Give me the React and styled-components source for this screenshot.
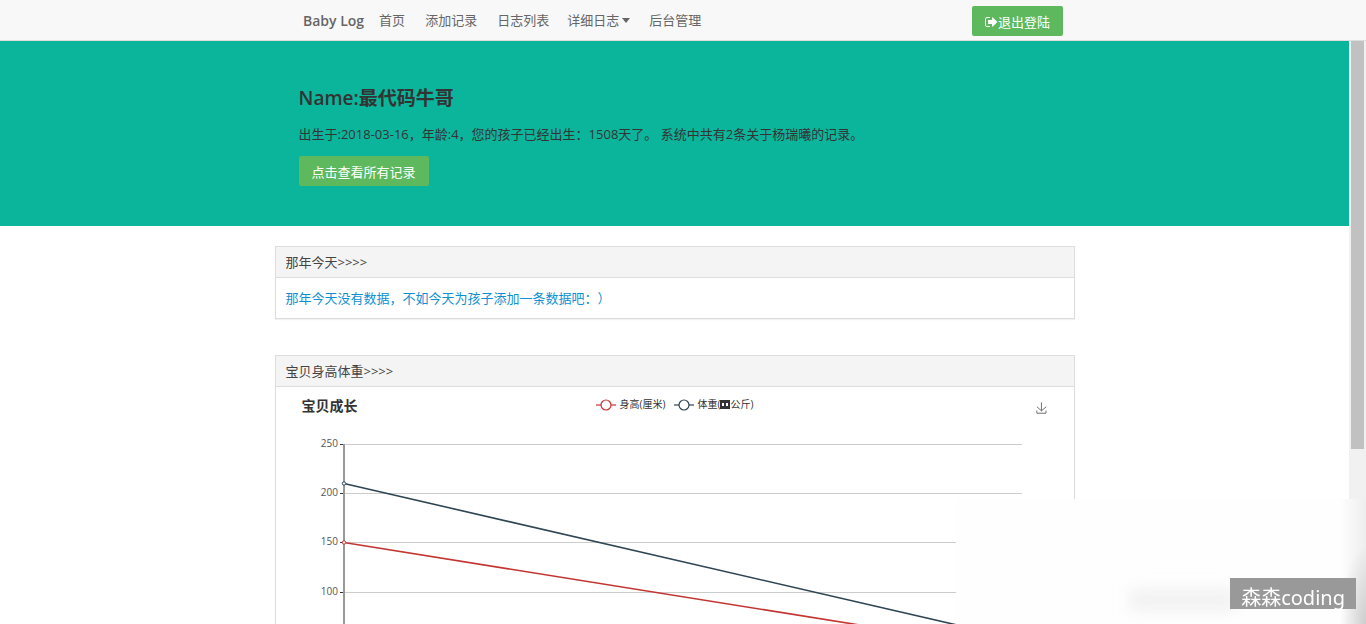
import React from 'react';
import styled, { createGlobalStyle } from 'styled-components';

const GlobalStyle = createGlobalStyle`
  *, *::before, *::after { box-sizing: border-box; }
  body {
    margin: 0;
    overflow: hidden;
    background: #fff;
    color: #333;
    font: 13px/20px "Open Sans", "Noto Sans CJK SC", sans-serif;
    text-spacing-trim: space-all;
  }
  button { font: inherit; cursor: pointer; }
  a { text-decoration: none; }
`;

const Page = styled.div`
  display: flex;
  flex-direction: column;
  height: 100vh;
  overflow: hidden;
`;

const Topbar = styled.header`
  flex: none;
  background: #f8f8f8;
  border-bottom: 1px solid #ddd;
`;

const TopbarInner = styled.div`
  display: flex;
  align-items: center;
  max-width: 800px;
  height: 40px;
  margin: 0 auto;
  padding: 2px 20px 0;
`;

const Brand = styled.a`
  color: #666;
  font-size: 14px;
  font-weight: 600;
  margin-right: 5px;
`;

const Nav = styled.nav`
  display: flex;
  flex: 1;
  padding-bottom: 2px;
`;

const NavLink = styled.a`
  padding: 0 10px;
  color: #666;
`;

const NavMenu = styled.button`
  display: flex;
  align-items: center;
  gap: 3px;
  padding: 0 9px 0 8px;
  border: 0;
  background: none;
  color: #666;
  &::after {
    content: "";
    border: 4px solid transparent;
    border-top: 5px solid #666;
    border-bottom: 0;
  }
`;

const Button = styled.button`
  display: inline-flex;
  align-items: center;
  height: 30px;
  padding: 1px 13px 0;
  border: 0;
  border-radius: 2px;
  background: #5eb95e;
  color: #fff;
`;

const Viewport = styled.div`
  display: flex;
  flex: 1;
  min-height: 0;
`;

const Main = styled.main`
  flex: 1;
  min-width: 0;
  overflow: hidden;
`;

const Track = styled.div`
  flex: none;
  width: 17px;
  padding: 0 2px;
  background: #f1f1f1;
`;

const Thumb = styled.div`
  height: 70%;
  background: #c1c1c1;
`;

const Hero = styled.section`
  padding: 40px 0;
  background: #0bb59b;
`;

const HeroInner = styled.div`
  max-width: 800px;
  margin: 0 auto;
  padding: 0 24px;
`;

const HeroTitle = styled.h1`
  margin: 0 0 11px;
  padding-top: 2px;
  font-size: 19px;
  line-height: 30px;
  font-weight: 600;
`;

const HeroText = styled.p`
  margin: 0 0 12px;
`;

const Panels = styled.div`
  display: flex;
  flex-direction: column;
  gap: 36px;
  max-width: 800px;
  margin: 20px auto;
`;

const Panel = styled.section`
  border: 1px solid #ddd;
  box-shadow: 0 1px 1px rgba(0, 0, 0, 0.05);
`;

const PanelTitle = styled.h2`
  margin: 0;
  padding: 5px 10px;
  border-bottom: 1px solid #ddd;
  background: #f4f4f4;
  color: #444;
  font-size: 13px;
  font-weight: 400;
`;

const PanelBody = styled.div`
  padding: 10px;
  a { color: #0e90d2; }
`;

const ChartHead = styled.div`
  display: grid;
  grid-template-columns: 1fr auto 1fr;
  height: 39px;
  padding: 9px 26px 0;
`;

const ChartTitle = styled.h3`
  margin: 0;
  font-size: 14px;
  line-height: 20px;
  font-weight: 700;
`;

const Legend = styled.ul`
  display: flex;
  gap: 8px;
  margin: 0;
  padding: 0;
  list-style: none;
  font-size: 10px;
  line-height: 16px;
`;

const LegendItem = styled.li`
  display: flex;
  gap: 4px;
  white-space: nowrap;
  svg { margin-top: 2px; }
`;

const Glyph = styled.span`
  display: inline-flex;
  align-items: center;
  justify-content: space-evenly;
  width: 10px;
  height: 9px;
  vertical-align: middle;
  margin-bottom: 2px;
  background: #333;
  &::before, &::after {
    content: "";
    width: 2px;
    height: 3px;
    background: #fff;
  }
`;

const ToolButton = styled.button`
  justify-self: end;
  align-self: start;
  display: flex;
  margin-top: 6px;
  padding: 0 1px;
  border: 0;
  background: none;
`;

const Plot = styled.svg`
  display: block;
  width: 100%;
  text {
    font-size: 10px;
    fill: #555;
    text-anchor: end;
  }
`;

const Haze = styled.div`
  position: fixed;
  right: 0;
  bottom: 0;
  width: 410px;
  height: 125px;
  overflow: hidden;
  background:
    radial-gradient(ellipse at bottom right, rgba(0, 0, 0, 0.14), transparent 70%) right bottom / 26px 80px no-repeat,
    linear-gradient(to right, transparent, #eeeeee) right top / 26px 100% no-repeat,
    #fefefe;
  &::before {
    content: "";
    position: absolute;
    right: 130px;
    bottom: 14px;
    width: 106px;
    height: 20px;
    background: #f0f0f0;
    filter: blur(8px);
  }
`;

const Watermark = styled.div`
  position: fixed;
  right: 10px;
  bottom: 15px;
  height: 31px;
  padding: 5px 11px 0;
  background: #999;
  color: #fff;
  font-family: "Noto Sans", "Noto Sans CJK SC", sans-serif;
  font-size: 20px;
  line-height: 30px;
`;

const SignOutIcon = () => (
  <svg width="13" height="10" viewBox="0 256 1664 1280" fill="currentColor" aria-hidden="true">
    <path d="M640 1440q0 4 1 20t.5 26.5-3 23.5-10 19.5-20.5 6.5h-320q-119 0-203.5-84.5t-84.5-203.5v-704q0-119 84.5-203.5t203.5-84.5h320q13 0 22.5 9.5t9.5 22.5q0 4 1 20t.5 26.5-3 23.5-10 19.5-20.5 6.5h-320q-66 0-113 47t-47 113v704q0 66 47 113t113 47h312l11.500 1 11.500 3 8 5.500 7 9 2 13.500zm928-544q0 26-19 45l-544 544q-19 19-45 19t-45-19-19-45v-288h-448q-26 0-45-19t-19-45v-384q0-26 19-45t45-19h448v-288q0-26 19-45t45-19 45 19l544 544q19 19 19 45z" />
  </svg>
);

const DownloadIcon = () => (
  <svg width="11" height="12" viewBox="0 -1 59 62" fill="none" stroke="#666" strokeWidth="5" aria-hidden="true">
    <path d="M4.700 22.900L29.300 45.500L54.700 23.400M4.600 43.600L4.600 58L53.800 58L53.800 43.600M29.200 45.100L29.200 0" />
  </svg>
);

const Marker = ({ color }) => (
  <svg width="20" height="14" viewBox="0 0 20 14" stroke={color} fill="#fff" aria-hidden="true">
    <path d="M0 7H20" strokeWidth="1.200" />
    <circle cx="10" cy="7" r="5" strokeWidth="1.200" />
  </svg>
);

const RED = '#c23531';
const NAVY = '#2f4554';
const TICKS = [
  { value: 250, y: 18 },
  { value: 200, y: 67 },
  { value: 150, y: 116 },
  { value: 100, y: 166 },
];

const GrowthPlot = () => (
  <Plot viewBox="0 0 798 300" role="img" aria-label="宝贝成长">
    {TICKS.map(({ value, y }) => (
      <g key={value}>
        <path d={`M68 ${y + 0.5}H746`} stroke="#ccc" />
        <path d={`M64 ${y + 0.5}H68`} stroke="#333" />
        <text x="62" y={y + 3}>{value}</text>
      </g>
    ))}
    <path d="M68 18V264" stroke="#999" strokeWidth="2" />
    <path d="M68 57.500L746 214" stroke={NAVY} strokeWidth="1.600" />
    <path d="M68 116.500L746 225" stroke={RED} strokeWidth="1.600" />
    <circle cx="68" cy="57.500" r="1.700" fill="#fff" stroke={NAVY} />
    <circle cx="68" cy="116.500" r="1.700" fill="#fff" stroke={RED} />
  </Plot>
);

export default function App() {
  return (
    <Page>
      <GlobalStyle />
      <Topbar>
        <TopbarInner>
          <Brand href="#">Baby Log</Brand>
          <Nav>
            <NavLink href="#">首页</NavLink>
            <NavLink href="#">添加记录</NavLink>
            <NavLink href="#">日志列表</NavLink>
            <NavMenu type="button">详细日志</NavMenu>
            <NavLink href="#">后台管理</NavLink>
          </Nav>
          <Button type="button"><SignOutIcon />退出登陆</Button>
        </TopbarInner>
      </Topbar>
      <Viewport>
        <Main>
          <Hero>
            <HeroInner>
              <HeroTitle>Name:最代码牛哥</HeroTitle>
              <HeroText>出生于:2018-03-16，年龄:4，您的孩子已经出生：1508天了。 系统中共有2条关于杨瑞曦的记录。</HeroText>
              <Button type="button">点击查看所有记录</Button>
            </HeroInner>
          </Hero>
          <Panels>
            <Panel>
              <PanelTitle>那年今天&gt;&gt;&gt;&gt;</PanelTitle>
              <PanelBody>
                <a href="#">那年今天没有数据，不如今天为孩子添加一条数据吧：）</a>
              </PanelBody>
            </Panel>
            <Panel>
              <PanelTitle>宝贝身高体重&gt;&gt;&gt;&gt;</PanelTitle>
              <ChartHead>
                <ChartTitle>宝贝成长</ChartTitle>
                <Legend>
                  <LegendItem><Marker color={RED} /><span>身高(厘米)</span></LegendItem>
                  <LegendItem><Marker color={NAVY} /><span>体重(<Glyph />公斤)</span></LegendItem>
                </Legend>
                <ToolButton type="button" aria-label="保存为图片"><DownloadIcon /></ToolButton>
              </ChartHead>
              <GrowthPlot />
            </Panel>
          </Panels>
        </Main>
        <Track><Thumb /></Track>
      </Viewport>
      <Haze />
      <Watermark>森森coding</Watermark>
    </Page>
  );
}
